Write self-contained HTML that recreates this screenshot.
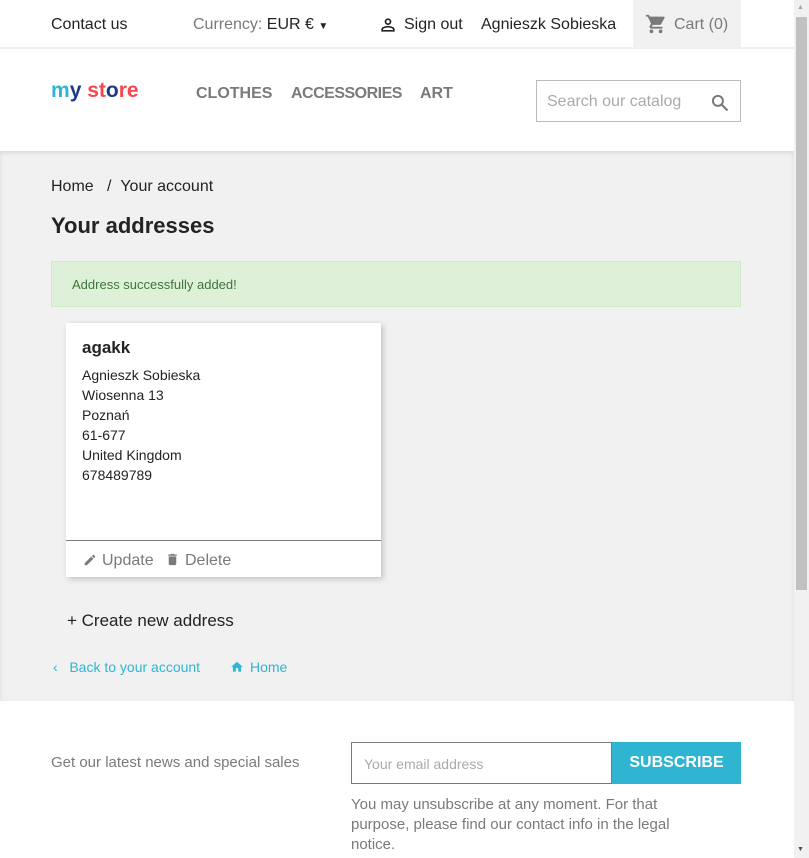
<!DOCTYPE html>
<html><head><meta charset="utf-8"><style>
*{box-sizing:border-box;margin:0;padding:0}
body{width:809px;height:858px;overflow:hidden;font-family:"Liberation Sans",sans-serif;background:#fff;color:#232323;position:relative}
.a{position:absolute;white-space:nowrap}
</style></head><body>
<div class="a" style="left:0;top:0;width:794px;height:49px;background:#fff;border-bottom:2px solid #f0f0f0"></div>
<div class="a" style="left:51px;top:16px;font-size:16px;color:#232323">Contact us</div>
<div class="a" style="left:193px;top:16px;font-size:16px;color:#7a7a7a">Currency: <span style="color:#232323">EUR €</span> <span style="font-size:10px;color:#232323">▼</span></div>
<svg class="a" style="left:378px;top:15px" width="20" height="20" viewBox="0 0 24 24"><path d="M12 4a4 4 0 1 1 0 8 4 4 0 0 1 0-8zm0 2a2 2 0 1 0 0 4 2 2 0 0 0 0-4zm0 7c2.7 0 8 1.3 8 4v3H4v-3c0-2.7 5.3-4 8-4zm0 2c-3 0-6 1.5-6 2v1h12v-1c0-.5-3-2-6-2z" fill="#232323"/></svg>
<div class="a" style="left:404px;top:16px;font-size:16px">Sign out</div>
<div class="a" style="left:481px;top:16px;font-size:16px">Agnieszk Sobieska</div>
<div class="a" style="left:633px;top:0;width:108px;height:48px;background:#f1f1f1"></div>
<svg class="a" style="left:645px;top:13px" width="22" height="22" viewBox="0 0 24 24"><path d="M7 18a2 2 0 1 0 0 4 2 2 0 0 0 0-4zM1 2v2h2l3.6 7.6-1.4 2.4c-.7 1.300.3 3 1.8 3h12v-2H7.4l1.1-2h7.5c.8 0 1.4-.4 1.7-1l3.6-6.5A1 1 0 0 0 20.4 4H5.2l-.9-2zm16 16a2 2 0 1 0 0 4 2 2 0 0 0 0-4z" fill="#7a7a7a"/></svg>
<div class="a" style="left:674px;top:16px;font-size:16px;color:#7a7a7a">Cart (0)</div>
<div class="a" style="left:51px;top:79px;font-size:21px;font-weight:bold;letter-spacing:0"><span style="color:#2fb5d2">m</span><span style="color:#1d3a8a">y</span> <span style="color:#f9474f">st</span><span style="color:#1d3a8a">o</span><span style="color:#f9474f">re</span></div>
<div class="a" style="left:196px;top:85px;font-size:16px;font-weight:bold;color:#7a7a7a">CLOTHES</div>
<div class="a" style="left:291px;top:85px;font-size:16px;font-weight:bold;color:#7a7a7a;letter-spacing:-0.5px">ACCESSORIES</div>
<div class="a" style="left:420px;top:85px;font-size:16px;font-weight:bold;color:#7a7a7a">ART</div>
<div class="a" style="left:536px;top:80px;width:205px;height:42px;border:1px solid #bbb;background:#fff"></div>
<div class="a" style="left:547px;top:93px;font-size:16px;color:#aaa">Search our catalog</div>
<svg class="a" style="left:710px;top:93px" width="20" height="20" viewBox="0 0 24 24"><circle cx="9.5" cy="9.5" r="6" stroke="#7a7a7a" stroke-width="2.4" fill="none"/><path d="M14 14l7 7" stroke="#7a7a7a" stroke-width="2.6"/></svg>
<div class="a" style="left:0;top:151px;width:794px;height:550px;background:#f1f1f1;box-shadow:inset 0 2px 4px rgba(0,0,0,.1)"></div>
<div class="a" style="left:51px;top:178px;font-size:16px">Home &nbsp; / &nbsp;Your account</div>
<div class="a" style="left:51px;top:213px;font-size:22px;font-weight:bold">Your addresses</div>
<div class="a" style="left:51px;top:261px;width:690px;height:46px;background:#dff0d8;border:1px solid #d0e9c6"></div>
<div class="a" style="left:72px;top:277px;font-size:13px;color:#3c763d">Address successfully added!</div>
<div class="a" style="left:66px;top:323px;width:315px;height:254px;background:#fff;box-shadow:2px 2px 6px rgba(0,0,0,.2)"></div>
<div class="a" style="left:82px;top:338px;font-size:17px;font-weight:bold">agakk</div>
<div class="a" style="left:82px;top:365px;font-size:14px;line-height:20px">Agnieszk Sobieska<br>Wiosenna 13<br>Poznań<br>61-677<br>United Kingdom<br>678489789</div>
<div class="a" style="left:66px;top:540px;width:315px;height:1px;background:#7a7a7a"></div>
<svg class="a" style="left:83px;top:553px" width="14" height="14" viewBox="0 0 24 24"><path d="M3 17.3V21h3.7L17.8 9.9l-3.7-3.7zM20.7 7c.4-.4.4-1 0-1.4l-2.3-2.3c-.4-.4-1-.4-1.4 0l-1.8 1.8 3.7 3.7z" fill="#7a7a7a"/></svg>
<div class="a" style="left:102px;top:552px;font-size:16px;color:#7a7a7a">Update</div>
<svg class="a" style="left:165px;top:552px" width="15" height="15" viewBox="0 0 24 24"><path d="M6 19c0 1.1.9 2 2 2h8c1.1 0 2-.9 2-2V7H6zM19 4h-3.5l-1-1h-5l-1 1H5v2h14z" fill="#7a7a7a"/></svg>
<div class="a" style="left:185px;top:552px;font-size:16px;color:#7a7a7a">Delete</div>
<div class="a" style="left:67px;top:611px;font-size:17px">+ Create new address</div>
<div class="a" style="left:53px;top:659px;font-size:14px;color:#2fb5d2">‹ &nbsp;&nbsp;Back to your account</div>
<svg class="a" style="left:230px;top:660px" width="14" height="14" viewBox="0 0 24 24"><path d="M10 20v-6h4v6h5v-8h3L12 3 2 12h3v8z" fill="#2fb5d2"/></svg>
<div class="a" style="left:250px;top:659px;font-size:14px;color:#2fb5d2">Home</div>
<div class="a" style="left:51px;top:754px;font-size:15px;color:#7a7a7a">Get our latest news and special sales</div>
<div class="a" style="left:351px;top:742px;width:261px;height:42px;border:1px solid #7a7a7a;background:#fff"></div>
<div class="a" style="left:364px;top:756px;font-size:14px;color:#aaa">Your email address</div>
<div class="a" style="left:612px;top:742px;width:129px;height:42px;background:#2fb5d2;color:#fff;font-weight:bold;font-size:16px;text-align:center;line-height:42px">SUBSCRIBE</div>
<div class="a" style="left:351px;top:795px;font-size:15px;line-height:20px;color:#7a7a7a;white-space:normal;width:360px">You may unsubscribe at any moment. For that purpose, please find our contact info in the legal notice.</div>
<div class="a" style="left:794px;top:0;width:15px;height:858px;background:#f1f1f1"></div>
<div class="a" style="left:796px;top:17px;width:11px;height:573px;background:#c1c1c1"></div>
<div class="a" style="left:797px;top:4px;font-size:7px;color:#a3a3a3">▲</div>
<div class="a" style="left:797px;top:846px;font-size:7px;color:#505050">▼</div>
</body></html>
